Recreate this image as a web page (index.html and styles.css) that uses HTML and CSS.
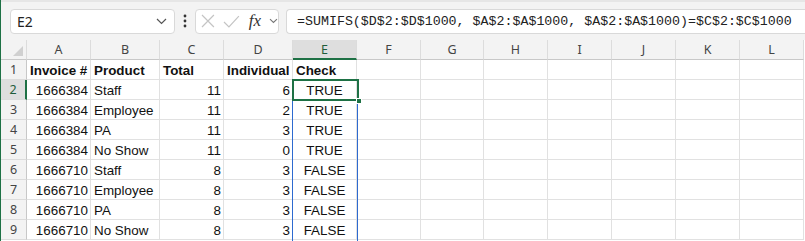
FILE: index.html
```html
<!DOCTYPE html>
<html>

<head>
    <meta charset="UTF-8">
    <meta name="viewport" content="width=device-width, initial-scale=1.0">
    <title>Check</title>
    <link rel="stylesheet" href="styles.css">
</head>

<body>
    <div class="app">
        <div class="toolbar">
            <div class="namebox">
                <span class="namebox__text">E2</span>
                <svg class="chevron" width="11" height="7" viewBox="0 0 11 7"><path d="M1 1l4.5 4.5L10 1" fill="none" stroke="#555" stroke-width="1.2"/></svg>
            </div>
            <svg class="toolbar__more" width="4" height="14" viewBox="0 0 4 14"><circle cx="2" cy="2" r="1.4" fill="#333"/><circle cx="2" cy="7" r="1.4" fill="#333"/><circle cx="2" cy="12" r="1.4" fill="#333"/></svg>
            <div class="fxbox">
                <svg width="14" height="14" viewBox="0 0 14 14"><path d="M1 1l12 12M13 1L1 13" fill="none" stroke="#c4c4c4" stroke-width="1.2"/></svg>
                <svg width="17" height="13" viewBox="0 0 17 13"><path d="M1 7l5 5L16 1" fill="none" stroke="#c4c4c4" stroke-width="1.2"/></svg>
                <span class="fxbox__fx">fx</span>
                <svg width="9" height="6" viewBox="0 0 9 6"><path d="M1 1l3.5 3.5L8 1" fill="none" stroke="#777" stroke-width="1.1"/></svg>
            </div>
            <div class="formula">=SUMIFS($D$2:$D$1000, $A$2:$A$1000, $A$2:$A$1000)=$C$2:$C$1000</div>
        </div>

        <div class="sheet">
            <div class="row row--head">
                <div class="cell corner"><span class="corner__mark"></span></div>
                <div class="cell">A</div>
                <div class="cell">B</div>
                <div class="cell">C</div>
                <div class="cell">D</div>
                <div class="cell cell--active-col">E</div>
                <div class="cell">F</div>
                <div class="cell">G</div>
                <div class="cell">H</div>
                <div class="cell">I</div>
                <div class="cell">J</div>
                <div class="cell">K</div>
                <div class="cell">L</div>
            </div>
            <div class="row">
                <div class="cell rownum">1</div>
                <div class="cell bold">Invoice #</div>
                <div class="cell bold">Product</div>
                <div class="cell bold">Total</div>
                <div class="cell bold">Individual</div>
                <div class="cell bold">Check</div>
                <div class="cell"></div><div class="cell"></div><div class="cell"></div><div class="cell"></div><div class="cell"></div><div class="cell"></div><div class="cell"></div>
            </div>
            <div class="row">
                <div class="cell rownum rownum--active">2</div>
                <div class="cell num">1666384</div>
                <div class="cell">Staff</div>
                <div class="cell num">11</div>
                <div class="cell num">6</div>
                <div class="cell center">TRUE</div>
                <div class="cell"></div><div class="cell"></div><div class="cell"></div><div class="cell"></div><div class="cell"></div><div class="cell"></div><div class="cell"></div>
            </div>
            <div class="row">
                <div class="cell rownum">3</div>
                <div class="cell num">1666384</div>
                <div class="cell">Employee</div>
                <div class="cell num">11</div>
                <div class="cell num">2</div>
                <div class="cell center">TRUE</div>
                <div class="cell"></div><div class="cell"></div><div class="cell"></div><div class="cell"></div><div class="cell"></div><div class="cell"></div><div class="cell"></div>
            </div>
            <div class="row">
                <div class="cell rownum">4</div>
                <div class="cell num">1666384</div>
                <div class="cell">PA</div>
                <div class="cell num">11</div>
                <div class="cell num">3</div>
                <div class="cell center">TRUE</div>
                <div class="cell"></div><div class="cell"></div><div class="cell"></div><div class="cell"></div><div class="cell"></div><div class="cell"></div><div class="cell"></div>
            </div>
            <div class="row">
                <div class="cell rownum">5</div>
                <div class="cell num">1666384</div>
                <div class="cell">No Show</div>
                <div class="cell num">11</div>
                <div class="cell num">0</div>
                <div class="cell center">TRUE</div>
                <div class="cell"></div><div class="cell"></div><div class="cell"></div><div class="cell"></div><div class="cell"></div><div class="cell"></div><div class="cell"></div>
            </div>
            <div class="row">
                <div class="cell rownum">6</div>
                <div class="cell num">1666710</div>
                <div class="cell">Staff</div>
                <div class="cell num">8</div>
                <div class="cell num">3</div>
                <div class="cell center">FALSE</div>
                <div class="cell"></div><div class="cell"></div><div class="cell"></div><div class="cell"></div><div class="cell"></div><div class="cell"></div><div class="cell"></div>
            </div>
            <div class="row">
                <div class="cell rownum">7</div>
                <div class="cell num">1666710</div>
                <div class="cell">Employee</div>
                <div class="cell num">8</div>
                <div class="cell num">3</div>
                <div class="cell center">FALSE</div>
                <div class="cell"></div><div class="cell"></div><div class="cell"></div><div class="cell"></div><div class="cell"></div><div class="cell"></div><div class="cell"></div>
            </div>
            <div class="row">
                <div class="cell rownum">8</div>
                <div class="cell num">1666710</div>
                <div class="cell">PA</div>
                <div class="cell num">8</div>
                <div class="cell num">3</div>
                <div class="cell center">FALSE</div>
                <div class="cell"></div><div class="cell"></div><div class="cell"></div><div class="cell"></div><div class="cell"></div><div class="cell"></div><div class="cell"></div>
            </div>
            <div class="row">
                <div class="cell rownum">9</div>
                <div class="cell num">1666710</div>
                <div class="cell">No Show</div>
                <div class="cell num">8</div>
                <div class="cell num">3</div>
                <div class="cell center">FALSE</div>
                <div class="cell"></div><div class="cell"></div><div class="cell"></div><div class="cell"></div><div class="cell"></div><div class="cell"></div><div class="cell"></div>
            </div>

            <div class="spill"></div>
            <div class="selection"><span class="selection__handle"></span></div>
        </div>
    </div>
</body>

</html>
```

FILE: styles.css
```css
*,
*::before,
*::after {
    box-sizing: border-box;
    margin: 0;
    padding: 0;
}

body {
    width: 805px;
    height: 241px;
    overflow: hidden;
    background-color: #ffffff;
    font-family: "Liberation Sans", Arial, sans-serif;
}

.app {
    height: 241px;
    border-left: 1px solid #1e7145;
    overflow: hidden;
}

.toolbar {
    display: flex;
    align-items: center;
    height: 40px;
    padding: 0 0 0 9px;
    background-color: #f3f3f3;
    border-top: 2px solid #e6e6e6;
}

.toolbar > * {
    flex: none;
}

.namebox,
.fxbox,
.formula {
    height: 25px;
    background-color: #ffffff;
    border: 1px solid #d9d9d9;
    border-radius: 4px;
}

.namebox {
    display: flex;
    align-items: center;
    justify-content: space-between;
    width: 165px;
    padding: 0 7px 0 6px;
}

.namebox__text {
    font-family: "Noto Sans", sans-serif;
    font-size: 14px;
    color: #222;
}

.toolbar__more {
    margin: 0 8px 0 8px;
}

.fxbox {
    display: flex;
    align-items: center;
    gap: 8px;
    width: 84px;
    padding: 0 0 0 5px;
}

.fxbox__fx {
    font-family: "Liberation Serif", serif;
    font-style: italic;
    font-size: 17px;
    color: #333;
    margin-left: 1px;
    margin-right: 0;
}

.formula {
    width: 540px;
    margin-left: 7px;
    padding: 0 0 0 10px;
    font-family: "Liberation Mono", monospace;
    font-size: 13.3px;
    line-height: 23px;
    color: #222;
    white-space: nowrap;
    border-right: none;
    border-radius: 4px 0 0 4px;
}

.sheet {
    position: relative;
}

.row {
    display: grid;
    grid-template-columns: 26px 64px 69px 64px 69px 64px 64px 63px 64px 64px 64px 64px 64px;
    height: 20px;
}

.cell {
    height: 20px;
    padding: 0 3px;
    border-right: 1px solid #e1e1e1;
    border-bottom: 1px solid #e1e1e1;
    font-size: 13.4px;
    line-height: 21px;
    color: #111;
    white-space: nowrap;
    overflow: hidden;
}

.bold {
    font-weight: bold;
}

.num {
    text-align: right;
    padding-right: 2px;
}

.center {
    text-align: center;
}

.row--head .cell {
    background-color: #f3f3f3;
    border-bottom: 1px solid #c8c8c8;
    border-right: 1px solid #dcdcdc;
    text-align: center;
    color: #444;
    font-family: "Noto Sans", sans-serif;
    font-size: 12.5px;
    line-height: 20px;
}

.row--head .cell.cell--active-col {
    background-color: #dedede;
    border-bottom: 2px solid #1e7145;
    color: #1e5c3a;
}

.corner {
    position: relative;
}

.corner__mark {
    position: absolute;
    right: 3px;
    bottom: 3px;
    width: 0;
    height: 0;
    border-left: 10px solid transparent;
    border-bottom: 10px solid #d0d0d0;
}

.rownum {
    background-color: #f3f3f3;
    border-right: 1px solid #c8c8c8;
    border-bottom: 1px solid #dcdcdc;
    text-align: center;
    color: #444;
    font-family: "Noto Sans", sans-serif;
    font-size: 12.5px;
    line-height: 20px;
}

.rownum--active {
    background-color: #dedede;
    border-right: 2px solid #1e7145;
    color: #1e5c3a;
}

.spill {
    position: absolute;
    left: 291px;
    top: 40px;
    width: 66px;
    height: 200px;
    border-left: 1px solid #2d6ad0;
    border-right: 1px solid #2d6ad0;
}

.selection {
    position: absolute;
    left: 291px;
    top: 39px;
    width: 67px;
    height: 22px;
    border: 2px solid #1e7145;
}

.selection__handle {
    position: absolute;
    right: -5px;
    bottom: -5px;
    width: 6px;
    height: 6px;
    background-color: #1e7145;
    border: 1px solid #ffffff;
}
```
